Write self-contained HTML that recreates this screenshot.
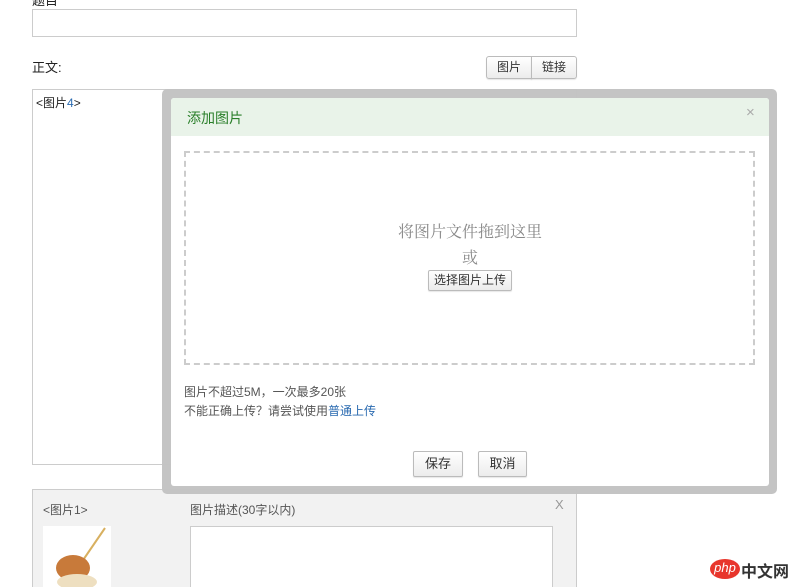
<!DOCTYPE html>
<html><head><meta charset="utf-8"><style>
*{box-sizing:border-box;margin:0;padding:0}
html,body{width:800px;height:587px;overflow:hidden}
body{background:#fff;font-family:"Liberation Sans","Noto Sans CJK SC",sans-serif;font-size:12px;color:#333;position:relative}
.a{position:absolute}
.btn{position:absolute;border:1px solid #bbb;border-radius:2px;background:linear-gradient(#fff,#ececec);text-align:center;color:#333;box-shadow:0 1px 1px rgba(0,0,0,.1)}
</style></head><body>
<div class="a" style="left:32px;top:-10px;font-size:13px;color:#222">题目</div>
<div class="a" style="left:32px;top:9px;width:545px;height:28px;border:1px solid #ccc;background:#fff"></div>
<div class="a" style="left:32px;top:57px;font-size:13px;color:#222">正文:</div>
<div class="btn" style="left:486px;top:56px;width:46px;height:23px;line-height:21px;border-radius:3px 0 0 3px">图片</div>
<div class="btn" style="left:531px;top:56px;width:46px;height:23px;line-height:21px;border-radius:0 3px 3px 0">链接</div>
<div class="a" style="left:32px;top:89px;width:545px;height:376px;border:1px solid #ccc"></div>
<div class="a" style="left:36px;top:94px;color:#222">&lt;图片<span style="color:#2a6ab0">4</span>&gt;</div>

<div class="a" style="left:32px;top:489px;width:545px;height:120px;background:#f2f2f2;border:1px solid #ccc"></div>
<div class="a" style="left:43px;top:501px;color:#555">&lt;图片1&gt;</div>
<div class="a" style="left:190px;top:501px;color:#555">图片描述(30字以内)</div>
<div class="a" style="left:555px;top:497px;color:#999;font-size:13px">X</div>
<div class="a" style="left:43px;top:526px;width:68px;height:61px;background:#fff">
<svg width="68" height="61"><line x1="62" y1="2" x2="36" y2="40" stroke="#d8b060" stroke-width="2"/><ellipse cx="30" cy="42" rx="17" ry="13" fill="#c87a3a"/><ellipse cx="34" cy="56" rx="20" ry="8" fill="#eedfc0"/></svg></div>
<div class="a" style="left:190px;top:526px;width:363px;height:90px;background:#fff;border:1px solid #ccc"></div>

<div class="a" style="left:162px;top:89px;width:615px;height:405px;background:#c2c2c2;border-radius:5px;opacity:.97"></div>
<div class="a" style="left:171px;top:98px;width:598px;height:388px;background:#fff;border-radius:3px;overflow:hidden">
 <div style="height:38px;background:#e9f3e9;color:#2a7f2a;font-size:14px;line-height:40px;padding-left:16px">添加图片</div>
 <div class="a" style="left:575px;top:6px;color:#aaa;font-size:15px">×</div>
</div>
<div class="a" style="left:184px;top:151px;width:571px;height:214px;border:2px dashed #ccc"></div>
<div class="a" style="left:370px;top:219px;width:200px;text-align:center;font-family:'Noto Serif CJK SC',serif;font-size:16px;color:#888">将图片文件拖到这里</div>
<div class="a" style="left:370px;top:245px;width:200px;text-align:center;font-family:'Noto Serif CJK SC',serif;font-size:16px;color:#888">或</div>
<div class="btn" style="left:428px;top:270px;width:84px;height:21px;line-height:19px;font-size:12px">选择图片上传</div>
<div class="a" style="left:184px;top:383px;color:#555;line-height:19px">图片不超过5M，一次最多20张<br>不能正确上传？请尝试使用<span style="color:#2a6ab0">普通上传</span></div>
<div class="btn" style="left:413px;top:451px;width:50px;height:26px;line-height:24px;font-size:13px">保存</div>
<div class="btn" style="left:478px;top:451px;width:49px;height:26px;line-height:24px;font-size:13px">取消</div>

<div class="a" style="left:710px;top:559px;width:30px;height:20px;border-radius:50%;background:#e8362c;color:#fff;font-size:13px;line-height:18px;text-align:center;font-style:italic">php</div>
<div class="a" style="left:741px;top:558px;font-size:16px;color:#333;font-weight:bold">中文网</div>
</body></html>
